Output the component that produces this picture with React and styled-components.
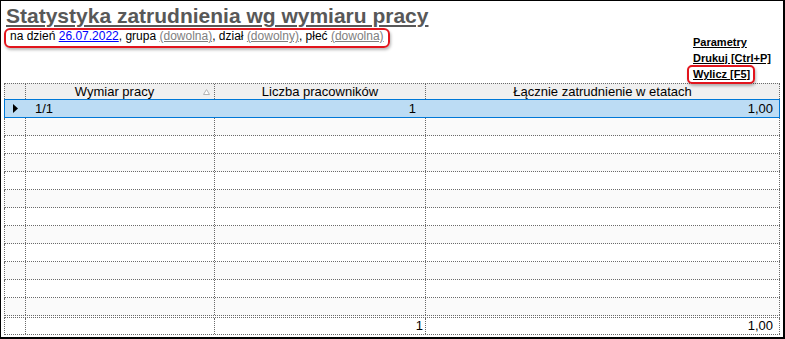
import React from "react";
import styled, { createGlobalStyle, css } from "styled-components";

const GlobalStyle = createGlobalStyle`
  html, body { margin: 0; padding: 0; background: #fff; }
  * { box-sizing: border-box; }
`;

const DOT = "1px dotted #6a6a6a";
const RED = "#e2151d";

const Frame = styled.div`
  width: 785px;
  height: 339px;
  border: solid #000;
  border-width: 1px 2px 2px 1px;
  padding: 0 3px;
  background: #fff;
  font-family: "Liberation Sans", Arial, sans-serif;
  overflow: hidden;
`;

const TopBar = styled.div`
  display: grid;
  grid-template-columns: 1fr 87px;
  height: 82px;
`;

const Heading = styled.div`
  display: flex;
  flex-direction: column;
  align-items: flex-start;
`;

const Title = styled.h1`
  margin: 3px 0 0 2px;
  font-size: 21px;
  line-height: 24px;
  font-weight: 700;
  color: #585858;
  text-decoration: underline;
  white-space: nowrap;
`;

const Criteria = styled.div`
  border: 2px solid ${RED};
  border-radius: 6px;
  padding: 0 4px 3px;
  font-size: 12px;
  line-height: 13px;
  color: #000;
  white-space: nowrap;
  box-shadow: 1px 2px 3px rgba(0, 0, 0, 0.28);
`;

const Value = styled.span`
  text-decoration: underline;
  color: ${(p) => (p.$date ? "#0000ff" : "#808080")};
`;

const Actions = styled.div`
  display: flex;
  flex-direction: column;
  align-items: flex-start;
  padding-top: 33px;
`;

const Action = styled.span`
  font-size: 11px;
  font-weight: 700;
  line-height: 16px;
  color: #000;
  text-decoration: underline;
  white-space: nowrap;
  ${(p) =>
    p.$highlight &&
    css`
      position: relative;
      z-index: 1;
      margin: -1px 0 0 -6px;
      padding: 0 3px 0 4px;
      line-height: 15px;
      border: 2px solid ${RED};
      border-radius: 5px;
      box-shadow: 1px 2px 3px rgba(0, 0, 0, 0.28);
    `}
`;

const Grid = styled.div`
  width: 776px;
  font-size: 13px;
  color: #000;
`;

const COLS = "21px 189px 211px 1fr";

const Row = styled.div`
  display: grid;
  grid-template-columns: ${COLS};
  height: 18px;
  border-left: ${DOT};
  border-bottom: ${DOT};
  background: ${(p) => (p.$alt ? "#fafafa" : "#fff")};
`;

const HeaderRow = styled(Row)`
  height: 16px;
  border-top: ${DOT};
  border-bottom: none;
  background: #f0f0f0;
`;

const SelectedRow = styled(Row)`
  height: 19px;
  border: 1px solid #0078d7;
  background: #bcdcf4;
`;

const FooterRow = styled(Row)`
  margin-top: 1px;
  border-top: ${DOT};
`;

const Cell = styled.div`
  border-right: ${(p) => (p.$plain ? "none" : DOT)};
  padding: 0 ${(p) => p.$pr || 0}px 0 ${(p) => p.$pl || 0}px;
  text-align: ${(p) => p.$align || "left"};
  line-height: ${(p) => p.$lh || 17}px;
  white-space: nowrap;
  overflow: hidden;
`;

const HeadCell = styled(Cell)`
  display: flex;
  align-items: center;
  line-height: 15px;
`;

const HeadLabel = styled.span`
  flex: 1;
  text-align: center;
`;

const SortGlyph = styled.svg`
  width: 7px;
  height: 6px;
  margin-right: 4px;
  flex: none;
`;

const MarkerCell = styled(Cell)`
  display: flex;
  align-items: center;
  justify-content: center;
`;

const Marker = styled.svg`
  width: 5px;
  height: 9px;
  margin-right: 1px;
`;

const EMPTY_ROWS = 11;

export default function App() {
  return (
    <>
      <GlobalStyle />
      <Frame>
        <TopBar>
          <Heading>
            <Title>Statystyka zatrudnienia wg wymiaru pracy</Title>
            <Criteria>
              na dzień <Value $date>26.07.2022</Value>, grupa <Value>(dowolna)</Value>, dział{" "}
              <Value>(dowolny)</Value>, płeć <Value>(dowolna)</Value>
            </Criteria>
          </Heading>
          <Actions>
            <Action>Parametry</Action>
            <Action>Drukuj [Ctrl+P]</Action>
            <Action $highlight>Wylicz [F5]</Action>
          </Actions>
        </TopBar>

        <Grid>
          <HeaderRow>
            <HeadCell />
            <HeadCell>
              <HeadLabel>Wymiar pracy</HeadLabel>
              <SortGlyph viewBox="0 0 7 6">
                <polygon points="0.5,5.5 3.5,0.5 6.5,5.5" fill="#fff" stroke="#b4b4b4" strokeWidth="1" />
              </SortGlyph>
            </HeadCell>
            <HeadCell>
              <HeadLabel>Liczba pracowników</HeadLabel>
            </HeadCell>
            <HeadCell>
              <HeadLabel>Łącznie zatrudnienie w etatach</HeadLabel>
            </HeadCell>
          </HeaderRow>

          <SelectedRow>
            <MarkerCell $plain>
              <Marker viewBox="0 0 5 9">
                <polygon points="0,0 5,4.5 0,9" fill="#000" />
              </Marker>
            </MarkerCell>
            <Cell $plain $pl={9}>1/1</Cell>
            <Cell $plain $align="right" $pr={10}>1</Cell>
            <Cell $plain $align="right" $pr={6}>1,00</Cell>
          </SelectedRow>

          {Array.from({ length: EMPTY_ROWS }, (_, i) => (
            <Row key={i} $alt={(i + 1) % 2 === 1}>
              <Cell />
              <Cell />
              <Cell />
              <Cell />
            </Row>
          ))}

          <FooterRow>
            <Cell $lh={16} />
            <Cell $lh={16} />
            <Cell $lh={16} $align="right" $pr={2}>1</Cell>
            <Cell $lh={16} $align="right" $pr={6}>1,00</Cell>
          </FooterRow>
        </Grid>
      </Frame>
    </>
  );
}
